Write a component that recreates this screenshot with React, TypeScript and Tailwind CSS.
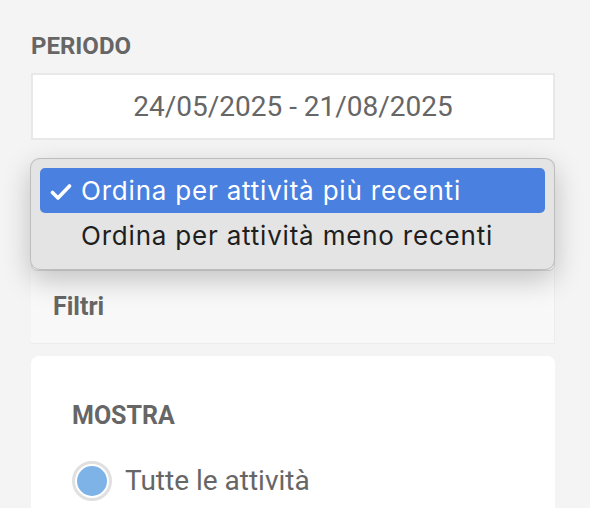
import React from "react";

export default function App() {
  return (
    <div className="relative w-[590px] h-[508px] overflow-hidden bg-[#f4f4f4] font-['Roboto',sans-serif]">
      <div className="flex flex-col pl-[31px] pr-[35px] pt-[32px]">
        <div className="text-[24px] leading-[28px] font-bold text-[#666]">PERIODO</div>
        <div className="mt-[13px] h-[67px] bg-white border-2 border-[#e8e8e8] flex items-center justify-center text-[28px] text-[#666]">
          24/05/2025 - 21/08/2025
        </div>
        <div className="mt-[19px] h-[112px] rounded-[6px] bg-white border border-[#dcdcdc]" />
        <div className="h-[73px] flex items-center px-[22px] bg-[#f8f8f8] border-b border-[#ececec] border-r border-r-[#ededed]">
          <span className="text-[25px] font-bold text-[#666]">Filtri</span>
        </div>
        <div className="mt-[12px] bg-white rounded-[8px] pt-[46px] px-[41px] h-[200px]">
          <div className="text-[25px] leading-[28px] font-bold text-[#666]">MOSTRA</div>
          <div className="mt-[30px] flex items-center gap-[13px]">
            <div className="w-[40px] h-[40px] rounded-full border-[3px] border-[#e0e0e0] bg-white p-[2px]">
              <div className="w-full h-full rounded-full bg-[#7db3e6]" />
            </div>
            <span className="text-[28px] text-[#666]">Tutte le attività</span>
          </div>
        </div>
      </div>

      <div className="absolute left-[30px] top-[158px] w-[525px] h-[112px] rounded-[10px] bg-[#e4e4e4] border border-[#bdbdbd] shadow-[0_10px_28px_rgba(0,0,0,0.22)] px-[9px] pt-[9px] font-['Inter',sans-serif] tracking-[0.8px]">
        <div className="h-[45px] rounded-[5px] bg-[#4a80e0] text-white flex items-center text-[26px]">
          <span className="w-[41px] pl-[10px] flex items-center">
            <svg width="22" height="16" viewBox="0 0 22 16" fill="none" className="mt-[3px]">
              <path d="M2.5 8.5 L8 14 L19.5 2" stroke="white" strokeWidth="3.6" strokeLinecap="round" strokeLinejoin="round" />
            </svg>
          </span>
          <span>Ordina per attività più recenti</span>
        </div>
        <div className="h-[45px] flex items-center text-[26px] text-[#1e1e1e]">
          <span className="w-[41px]" />
          <span>Ordina per attività meno recenti</span>
        </div>
      </div>
    </div>
  );
}
